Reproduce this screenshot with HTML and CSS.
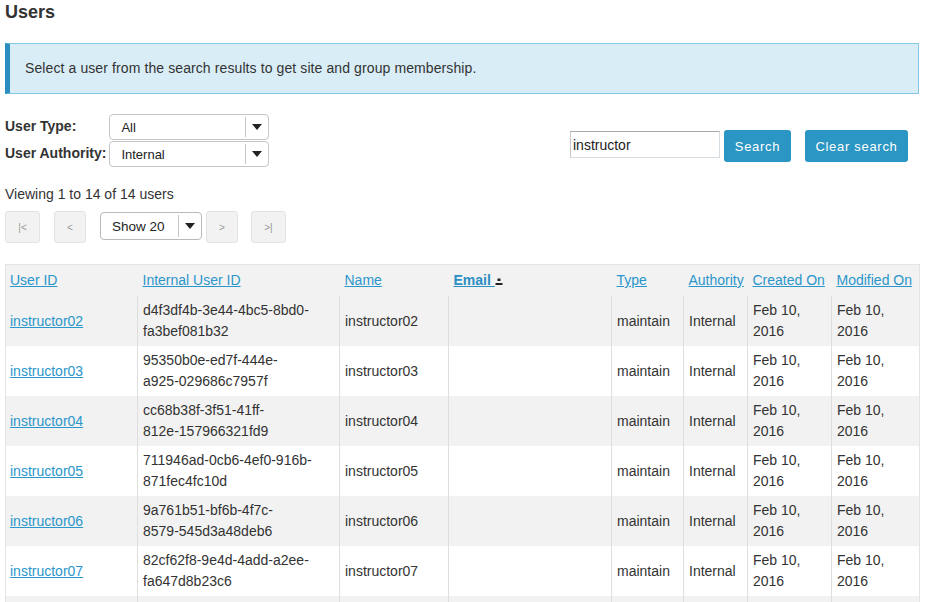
FILE: index.html
```html
<!DOCTYPE html>
<html>
<head>
<meta charset="utf-8">
<title>Users</title>
<link rel="stylesheet" href="styles.css">
</head>
<body>
<div class="page">
  <h1 class="title">Users</h1>
  <div class="info">Select a user from the search results to get site and group membership.</div>

  <div class="filters">
    <div class="filter-grid">
      <label class="flabel">User Type:</label>
      <div class="sel"><span class="sel-text">All</span><span class="sel-btn"><span class="tri"></span></span></div>
      <label class="flabel">User Authority:</label>
      <div class="sel"><span class="sel-text">Internal</span><span class="sel-btn"><span class="tri"></span></span></div>
    </div>
    <div class="search">
      <input class="search-input" type="text" value="instructor">
      <button class="btn btn-search">Search</button>
      <button class="btn btn-clear">Clear search</button>
    </div>
  </div>

  <div class="viewing">Viewing 1 to 14 of 14 users</div>

  <div class="pager">
    <button class="pbtn pbtn-wide">|&lt;</button>
    <button class="pbtn">&lt;</button>
    <div class="sel sel-show"><span class="sel-text">Show 20</span><span class="sel-btn"><span class="tri"></span></span></div>
    <button class="pbtn pbtn-next">&gt;</button>
    <button class="pbtn pbtn-wide">&gt;|</button>
  </div>

  <table class="users">
    <colgroup>
      <col class="c1"><col class="c2"><col class="c3"><col class="c4"><col class="c5"><col class="c6"><col class="c7"><col class="c8">
    </colgroup>
    <thead>
      <tr>
        <th><a href="#">User ID</a></th>
        <th><a href="#">Internal User ID</a></th>
        <th><a href="#">Name</a></th>
        <th><a href="#" class="sorted">Email </a><svg class="sort-ico" width="8" height="8" viewBox="0 0 8 8"><rect x="2.5" y="0.5" width="3" height="2.5" fill="#222"/><rect x="0.5" y="5" width="7" height="2" fill="#222"/></svg></th>
        <th><a href="#">Type</a></th>
        <th><a href="#">Authority</a></th>
        <th><a href="#">Created On</a></th>
        <th><a href="#">Modified On</a></th>
      </tr>
    </thead>
    <tbody>
      <tr><td><a href="#">instructor02</a></td><td>d4f3df4b-3e44-4bc5-8bd0-<br>fa3bef081b32</td><td>instructor02</td><td></td><td>maintain</td><td>Internal</td><td>Feb 10, 2016</td><td>Feb 10, 2016</td></tr>
      <tr><td><a href="#">instructor03</a></td><td>95350b0e-ed7f-444e-<br>a925-029686c7957f</td><td>instructor03</td><td></td><td>maintain</td><td>Internal</td><td>Feb 10, 2016</td><td>Feb 10, 2016</td></tr>
      <tr><td><a href="#">instructor04</a></td><td>cc68b38f-3f51-41ff-<br>812e-157966321fd9</td><td>instructor04</td><td></td><td>maintain</td><td>Internal</td><td>Feb 10, 2016</td><td>Feb 10, 2016</td></tr>
      <tr><td><a href="#">instructor05</a></td><td>711946ad-0cb6-4ef0-916b-<br>871fec4fc10d</td><td>instructor05</td><td></td><td>maintain</td><td>Internal</td><td>Feb 10, 2016</td><td>Feb 10, 2016</td></tr>
      <tr><td><a href="#">instructor06</a></td><td>9a761b51-bf6b-4f7c-<br>8579-545d3a48deb6</td><td>instructor06</td><td></td><td>maintain</td><td>Internal</td><td>Feb 10, 2016</td><td>Feb 10, 2016</td></tr>
      <tr><td><a href="#">instructor07</a></td><td>82cf62f8-9e4d-4add-a2ee-<br>fa647d8b23c6</td><td>instructor07</td><td></td><td>maintain</td><td>Internal</td><td>Feb 10, 2016</td><td>Feb 10, 2016</td></tr>
      <tr><td><a href="#">instructor08</a></td><td>3b1e7c2a-5d4f-4a61-9c8e-<br>2f7a6b0d91e4</td><td>instructor08</td><td></td><td>maintain</td><td>Internal</td><td>Feb 10, 2016</td><td>Feb 10, 2016</td></tr>
    </tbody>
  </table>
</div>
</body>
</html>
```
FILE: styles.css
```css
html, body {
  margin: 0;
  padding: 0;
  background: #fff;
}
body {
  font-family: "Liberation Sans", Arial, sans-serif;
  font-size: 14px;
  color: #333;
}
.page {
  padding: 0 15px 0 5px;
}
.title {
  margin: 0;
  padding-top: 2px;
  font-size: 18px;
  line-height: 20px;
  font-weight: bold;
  color: #333;
}
.info {
  margin-top: 21px;
  background: #d9edf7;
  border: 1px solid #86c6e6;
  border-left: 5px solid #2a8fc0;
  padding: 15px 15px;
  line-height: 19px;
  font-size: 14px;
  letter-spacing: 0.1px;
  color: #333;
}
.filters {
  display: flex;
  align-items: flex-start;
  margin-top: 20px;
}
.filter-grid {
  display: grid;
  grid-template-columns: auto 160px;
  column-gap: 3px;
  row-gap: 1px;
  align-items: center;
}
.flabel {
  font-weight: bold;
  font-size: 14px;
  line-height: 18px;
  margin-top: -3px;
}
.sel {
  display: flex;
  align-items: center;
  height: 26px;
  box-sizing: border-box;
  border: 1px solid #c6c6c6;
  border-radius: 4px;
  background: #fff;
  font-size: 13px;
  color: #222;
}
.sel-text {
  flex: 1;
  padding-left: 11px;
  padding-top: 1px;
}
.sel-btn {
  display: flex;
  align-items: center;
  justify-content: center;
  width: 21px;
  height: 20px;
  border-left: 1px solid #c6c6c6;
  margin-right: 1px;
}
.tri {
  width: 0;
  height: 0;
  border-left: 5px solid transparent;
  border-right: 5px solid transparent;
  border-top: 6px solid #222;
  margin-left: 1px;
}
.search {
  display: flex;
  align-items: flex-start;
  margin-left: auto;
  margin-right: 11px;
  margin-top: 16px;
  gap: 4px;
}
.search-input {
  width: 150px;
  height: 27px;
  box-sizing: border-box;
  margin: 1px 0 0 0;
  border: 1px solid #d5dde3;
  border-top-color: #a9a9a9;
  border-left-color: #c8c8c8;
  padding: 0 2px;
  font-family: "Liberation Sans", Arial, sans-serif;
  font-size: 14px;
  color: #222;
  outline: none;
}
.btn {
  height: 32px;
  box-sizing: border-box;
  border: none;
  border-radius: 3px;
  background: #2b95c3;
  color: #fff;
  font-family: "Liberation Sans", Arial, sans-serif;
  font-size: 13px;
  letter-spacing: 0.7px;
  padding: 0;
  margin: 0;
  text-align: center;
}
.btn-search {
  width: 67px;
}
.btn-clear {
  width: 103px;
  margin-left: 10px;
}
.viewing {
  margin-top: 17px;
  line-height: 20px;
  font-size: 14px;
}
.pager {
  display: flex;
  align-items: flex-start;
  margin-top: 7px;
}
.pbtn {
  width: 32px;
  height: 32px;
  box-sizing: border-box;
  border: 1px solid #e3e3e3;
  border-radius: 3px;
  background: #f2f2f2;
  color: #999;
  font-family: "Liberation Sans", Arial, sans-serif;
  font-size: 10px;
  padding: 0;
  margin: 0 14px 0 0;
}
.pbtn-wide {
  width: 35px;
}
.pbtn-next {
  margin-right: 13px;
}
.sel-show {
  width: 102px;
  height: 28px;
  margin: 1px 4px 0 0;
  border-color: #b9b9b9;
  font-size: 13.5px;
}
.sel-show .sel-text {
  padding-left: 11px;
  padding-top: 0;
}
.sel-show .sel-btn {
  height: 22px;
}
.users {
  margin-top: 21px;
  width: 914px;
  table-layout: fixed;
  border-collapse: collapse;
  border: 1px solid #e4e4e4;
  font-size: 14px;
}
.c1 { width: 132px; }
.c2 { width: 202px; }
.c3 { width: 109px; }
.c4 { width: 163px; }
.c5 { width: 72px; }
.c6 { width: 64px; }
.c7 { width: 84px; }
.c8 { width: 88px; }
.users th {
  background: #f2f2f2;
  text-align: left;
  font-weight: normal;
  padding: 5px 4px 5px 5px;
  line-height: 21px;
  white-space: nowrap;
}
.users th:first-child,
.users td:first-child {
  padding-left: 4px;
}
.users a {
  color: #2b96cb;
  text-decoration: underline;
}
.users th a.sorted {
  font-weight: bold;
  color: #2b8fc3;
}
.sort-ico {
  vertical-align: -1px;
}
.users td {
  padding: 4px 4px 4px 5px;
  line-height: 21px;
  vertical-align: middle;
  border-left: 1px solid #dedede;
  color: #333;
}
.users td:first-child {
  border-left: none;
}
.users tbody tr:nth-child(odd) td {
  background: #f2f2f2;
}
.users tbody tr:nth-child(even) td {
  background: #fff;
}
```
